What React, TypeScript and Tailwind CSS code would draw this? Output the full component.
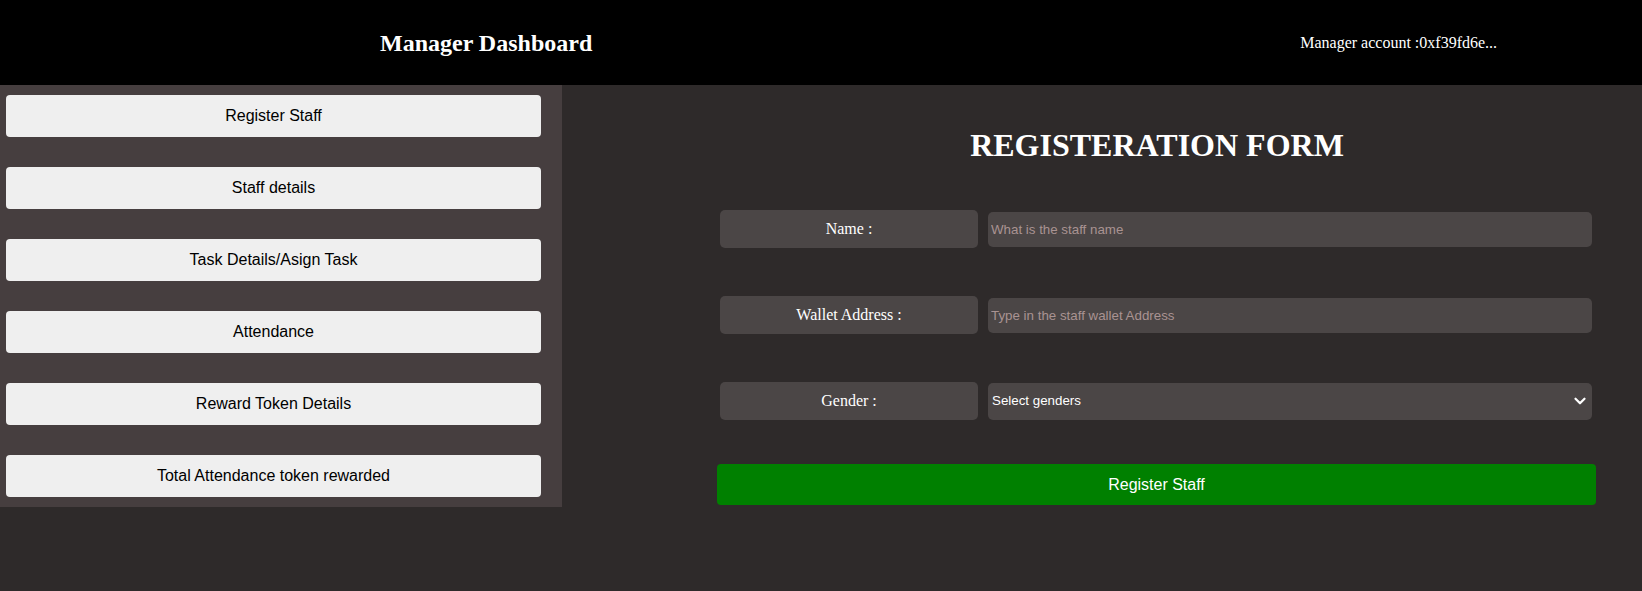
import { ChevronDown } from 'lucide-react'

const menu = [
  'Register Staff',
  'Staff details',
  'Task Details/Asign Task',
  'Attendance',
  'Reward Token Details',
  'Total Attendance token rewarded',
]

const serif = "font-['Liberation_Serif','Times_New_Roman',serif]"
const sans = "font-['Liberation_Sans',Arial,sans-serif]"

export default function App() {
  return (
    <div className={`min-h-[591px] bg-[#2e2a2a] ${serif}`}>
      <header className="h-[85px] bg-black flex items-center text-white">
        <h2 className="ml-[380px] text-[24px] font-bold leading-none">Manager Dashboard</h2>
        <p className="ml-[708px] text-[16px] leading-none">Manager account :0xf39fd6e...</p>
      </header>

      <div className="flex items-start">
        <aside className="w-[562px] bg-[#463e3f] py-[10px] flex flex-col gap-[30px]">
          {menu.map((item) => (
            <button
              key={item}
              className={`ml-[6px] w-[535px] h-[42px] rounded-[4px] bg-[#efefef] text-black text-[16px] ${sans}`}
            >
              {item}
            </button>
          ))}
        </aside>

        <main className="flex-1">
          <div className="ml-[155px] w-[880px] pt-[42px]">
            <h1 className="text-center text-white text-[32px] font-bold leading-[37px]">
              REGISTERATION FORM
            </h1>

            <form className="mt-[46px] flex flex-col gap-[48px]" onSubmit={(e) => e.preventDefault()}>
              <div className="flex items-center gap-[10px] pl-[3px]">
                <label className="w-[258px] h-[38px] rounded-[5px] bg-[#4b4646] text-white text-[16px] flex items-center justify-center">
                  Name :
                </label>
                <input
                  placeholder="What is the staff name"
                  className={`w-[604px] h-[35px] rounded-[5px] bg-[#4b4646] px-[3px] text-[13.33px] text-white placeholder:text-[#a99392] outline-none ${sans}`}
                />
              </div>

              <div className="flex items-center gap-[10px] pl-[3px]">
                <label className="w-[258px] h-[38px] rounded-[5px] bg-[#4b4646] text-white text-[16px] flex items-center justify-center">
                  Wallet Address :
                </label>
                <input
                  placeholder="Type in the staff wallet Address"
                  className={`w-[604px] h-[35px] rounded-[5px] bg-[#4b4646] px-[3px] text-[13.33px] text-white placeholder:text-[#a99392] outline-none ${sans}`}
                />
              </div>

              <div className="flex items-center gap-[10px] pl-[3px]">
                <label className="w-[258px] h-[38px] rounded-[5px] bg-[#4b4646] text-white text-[16px] flex items-center justify-center">
                  Gender :
                </label>
                <div className="relative w-[604px] h-[37px]">
                  <select
                    className={`appearance-none w-full h-full rounded-[5px] bg-[#4b4646] pl-[4px] text-[13.33px] text-white outline-none ${sans}`}
                  >
                    <option>Select genders</option>
                    <option>Male</option>
                    <option>Female</option>
                  </select>
                  <ChevronDown
                    size={18}
                    strokeWidth={3}
                    className="absolute right-[3px] top-[9px] text-white pointer-events-none"
                  />
                </div>
              </div>

              <button
                type="submit"
                className={`-mt-[4px] w-[879px] h-[41px] rounded-[4px] bg-[#008000] text-white text-[16px] ${sans}`}
              >
                Register Staff
              </button>
            </form>
          </div>
        </main>
      </div>
    </div>
  )
}
